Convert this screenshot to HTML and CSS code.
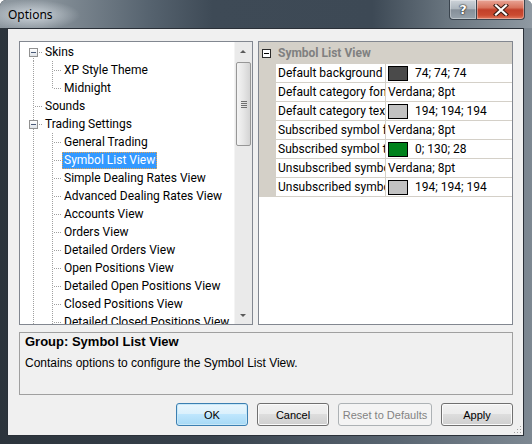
FILE: index.html
```html
<!DOCTYPE html>
<html lang="en">
<head>
  <meta charset="UTF-8">
  <title>Options</title>
  <link rel="stylesheet" href="styles.css">
</head>
<body>

  <div class="window">
    <div class="titlebar">
      <span class="title">Options</span>
      <div class="caption">
        <div class="cbtn help">?</div>
        <div class="cbtn close">
          <svg width="16" height="12" viewBox="0 0 16 12">
            <path d="M3 1.5 L13 10.5 M13 1.5 L3 10.5" stroke="#3b1c14" stroke-width="4.2" stroke-linecap="square" fill="none"/>
            <path d="M3 1.5 L13 10.5 M13 1.5 L3 10.5" stroke="#ffffff" stroke-width="2.2" stroke-linecap="square" fill="none"/>
          </svg>
        </div>
      </div>
    </div>

    <div class="client">
      <div class="panes">
        <div class="tree">
          <div class="tree-list">
            <div class="row"><span class="g g-exp g-first"><span class="box"></span></span><span class="label">Skins</span></div>
            <div class="row"><span class="g g-pipe"></span><span class="g g-tee"></span><span class="label">XP Style Theme</span></div>
            <div class="row"><span class="g g-pipe"></span><span class="g g-end"></span><span class="label">Midnight</span></div>
            <div class="row"><span class="g g-tee"></span><span class="label">Sounds</span></div>
            <div class="row"><span class="g g-exp"><span class="box"></span></span><span class="label">Trading Settings</span></div>
            <div class="row"><span class="g g-pipe"></span><span class="g g-tee"></span><span class="label">General Trading</span></div>
            <div class="row"><span class="g g-pipe"></span><span class="g g-tee"></span><span class="label selected">Symbol List View</span></div>
            <div class="row"><span class="g g-pipe"></span><span class="g g-tee"></span><span class="label">Simple Dealing Rates View</span></div>
            <div class="row"><span class="g g-pipe"></span><span class="g g-tee"></span><span class="label">Advanced Dealing Rates View</span></div>
            <div class="row"><span class="g g-pipe"></span><span class="g g-tee"></span><span class="label">Accounts View</span></div>
            <div class="row"><span class="g g-pipe"></span><span class="g g-tee"></span><span class="label">Orders View</span></div>
            <div class="row"><span class="g g-pipe"></span><span class="g g-tee"></span><span class="label">Detailed Orders View</span></div>
            <div class="row"><span class="g g-pipe"></span><span class="g g-tee"></span><span class="label">Open Positions View</span></div>
            <div class="row"><span class="g g-pipe"></span><span class="g g-tee"></span><span class="label">Detailed Open Positions View</span></div>
            <div class="row"><span class="g g-pipe"></span><span class="g g-tee"></span><span class="label">Closed Positions View</span></div>
            <div class="row"><span class="g g-pipe"></span><span class="g g-tee"></span><span class="label">Detailed Closed Positions View</span></div>
          </div>
          <div class="vscroll">
            <div class="arrow up"></div>
            <div class="thumb"><span></span><span></span><span></span><span></span></div>
            <div class="track"></div>
            <div class="arrow down"></div>
          </div>
        </div>

        <div class="grid">
          <div class="grid-head"><span class="gbox"></span>Symbol List View</div>
          <div class="prop"><span class="margin"></span><span class="name">Default background</span><span class="value"><i class="swatch dark"></i>74; 74; 74</span></div>
          <div class="prop"><span class="margin"></span><span class="name">Default category font</span><span class="value">Verdana; 8pt</span></div>
          <div class="prop"><span class="margin"></span><span class="name">Default category text color</span><span class="value"><i class="swatch silver"></i>194; 194; 194</span></div>
          <div class="prop"><span class="margin"></span><span class="name">Subscribed symbol font</span><span class="value">Verdana; 8pt</span></div>
          <div class="prop"><span class="margin"></span><span class="name">Subscribed symbol text color</span><span class="value"><i class="swatch green"></i>0; 130; 28</span></div>
          <div class="prop"><span class="margin"></span><span class="name">Unsubscribed symbol font</span><span class="value">Verdana; 8pt</span></div>
          <div class="prop"><span class="margin"></span><span class="name">Unsubscribed symbol text color</span><span class="value"><i class="swatch silver"></i>194; 194; 194</span></div>
        </div>
      </div>

      <div class="desc">
        <div class="desc-title">Group: Symbol List View</div>
        <div class="desc-text">Contains options to configure the Symbol List View.</div>
      </div>

      <div class="buttons">
        <button class="btn default">OK</button>
        <button class="btn">Cancel</button>
        <button class="btn" disabled>Reset to Defaults</button>
        <button class="btn">Apply</button>
      </div>

      <svg class="grip" width="9" height="9" viewBox="0 0 9 9">
        <rect x="7" y="1" width="1" height="1" fill="#a0a0a0"/>
        <rect x="4" y="4" width="1" height="1" fill="#a0a0a0"/>
        <rect x="7" y="4" width="1" height="1" fill="#a0a0a0"/>
        <rect x="1" y="7" width="1" height="1" fill="#a0a0a0"/>
        <rect x="4" y="7" width="1" height="1" fill="#a0a0a0"/>
        <rect x="7" y="7" width="1" height="1" fill="#a0a0a0"/>
      </svg>
    </div>
  </div>

</body>
</html>
```

FILE: styles.css
```css
body {
  margin: 0;
  background: #ffffff;
}

.window {
  width: 532px;
  height: 444px;
  display: flex;
  flex-direction: column;
  border-radius: 6px 6px 0 0;
  overflow: hidden;
  background: linear-gradient(90deg, #2c343c 0, #38424c 40%, #5a6672 75%, #7d8892 100%);
  font-family: "Liberation Sans", Arial, sans-serif;
}

/* title bar */
.titlebar {
  height: 28px;
  flex: none;
  display: flex;
  align-items: flex-start;
  background:
    radial-gradient(ellipse 48px 15px at 32px 15px, rgba(214, 221, 227, 0.9), rgba(214, 221, 227, 0)),
    linear-gradient(90deg, #8d979f 0, #8a949c 8%, #56636f 28%, #3e4a56 40%, #3d4955 70%, #69757f 84%, #8f99a2 100%);
}

.title {
  padding-left: 8px;
  line-height: 30px;
  font-family: "Noto Sans", sans-serif;
  font-size: 12px;
  color: #000;
}

.caption {
  margin-left: auto;
  margin-right: 7px;
  display: flex;
}

.cbtn {
  height: 19px;
  border: 1px solid #3a444e;
  border-top: none;
  box-shadow: inset 0 0 0 1px rgba(255, 255, 255, 0.35);
  display: flex;
  align-items: center;
  justify-content: center;
}

.help {
  width: 26px;
  border-radius: 0 0 0 4px;
  border-right: none;
  background: linear-gradient(#cdd3d9 0, #aeb7bf 45%, #858f99 52%, #97a2ab 100%);
  color: #fff;
  font-family: "DejaVu Sans", sans-serif;
  font-weight: bold;
  font-size: 13px;
  text-shadow: 0 0 1px #222, 0 0 1px #222, 0 0 2px #333;
}

.close {
  width: 47px;
  border-radius: 0 0 4px 0;
  background: linear-gradient(#e9a596 0, #d8735d 40%, #c2402a 52%, #cb4b31 80%, #e07a60 100%);
}

/* client area */
.client {
  flex: 1;
  margin: 0 8px 8px 7px;
  border: 1px solid #2a3038;
  background: #f0f0f0;
  padding: 12px 10px 9px 11px;
  display: flex;
  flex-direction: column;
  position: relative;
}

.panes {
  height: 284px;
  display: flex;
  gap: 5px;
}

/* tree */
.tree {
  width: 234px;
  box-sizing: border-box;
  border: 1px solid #828790;
  background: #fff;
  display: flex;
  overflow: hidden;
}

.tree-list {
  flex: 1;
  padding: 1px 0 0 4px;
  overflow: hidden;
  font-family: Roboto, sans-serif;
  font-size: 12px;
  color: #000;
}

.row {
  height: 18px;
  display: flex;
  align-items: center;
  white-space: nowrap;
}

.g {
  width: 19px;
  height: 18px;
  flex: none;
  position: relative;
}

.g::before,
.g::after {
  content: "";
  position: absolute;
}

.g-pipe::before,
.g-tee::before,
.g-end::before,
.g-exp::before {
  left: 9px;
  top: 0;
  bottom: 0;
  width: 1px;
  background-image: linear-gradient(#a0a0a0 50%, transparent 50%);
  background-size: 1px 2px;
}

.g-end::before {
  bottom: 9px;
}

.g-first::before {
  top: 9px;
}

.g-tee::after,
.g-end::after,
.g-exp::after {
  left: 11px;
  top: 9px;
  width: 8px;
  height: 1px;
  background-image: linear-gradient(90deg, #a0a0a0 50%, transparent 50%);
  background-size: 2px 1px;
}

.g-exp::after {
  left: 15px;
  width: 4px;
}

.box {
  position: absolute;
  left: 5px;
  top: 5px;
  width: 7px;
  height: 7px;
  border: 1px solid #919191;
  background: linear-gradient(#ffffff, #dfe3e8);
  z-index: 1;
}

.box::after {
  content: "";
  position: absolute;
  left: 1px;
  top: 3px;
  width: 5px;
  height: 1px;
  background: #4a5a78;
}

.label {
  height: 17px;
  line-height: 17px;
  padding: 0 2px;
  box-sizing: border-box;
}

.label.selected {
  background: #3399ff;
  color: #fff;
  border: 1px dotted #e8a24a;
  line-height: 15px;
  padding: 0 1px;
}

/* scrollbar */
.vscroll {
  width: 17px;
  flex: none;
  background: #eaeaea;
  border-left: 1px solid #f4f4f4;
  display: flex;
  flex-direction: column;
  align-items: center;
}

.arrow {
  height: 17px;
  width: 17px;
  position: relative;
  flex: none;
}

.arrow::after {
  content: "";
  position: absolute;
  left: 5px;
  border-left: 3px solid transparent;
  border-right: 3px solid transparent;
}

.arrow.up::after {
  top: 8px;
  border-bottom: 3px solid #5a5a5a;
}

.arrow.down::after {
  top: 7px;
  border-top: 3px solid #5a5a5a;
}

.thumb {
  width: 13px;
  height: 82px;
  margin-top: 3px;
  border: 1px solid #979797;
  border-radius: 2px;
  background: linear-gradient(90deg, #f4f4f4, #e6e6e6 50%, #d4d4d4);
  display: flex;
  flex-direction: column;
  align-items: center;
  justify-content: center;
  gap: 1px;
  flex: none;
}

.thumb span {
  width: 6px;
  height: 1px;
  background: #707070;
}

.track {
  flex: 1;
}

/* property grid */
.grid {
  flex: 1;
  border: 1px solid #828790;
  background: #fff;
  font-family: Roboto, sans-serif;
  font-size: 12px;
  color: #000;
  overflow: hidden;
}

.grid-head {
  height: 22px;
  background: #d4d0c8;
  display: flex;
  align-items: center;
  padding-left: 3px;
  font-weight: bold;
  color: #808080;
}

.gbox {
  width: 7px;
  height: 7px;
  border: 1px solid #2a2a2a;
  background: #fff;
  margin-right: 7px;
  position: relative;
}

.gbox::after {
  content: "";
  position: absolute;
  left: 1px;
  top: 3px;
  width: 5px;
  height: 1px;
  background: #000;
}

.prop {
  height: 18px;
  display: flex;
  border-bottom: 1px solid #d4d0c8;
  line-height: 18px;
  white-space: nowrap;
}

.margin {
  width: 17px;
  flex: none;
  background: #d4d0c8;
}

.name {
  width: 107px;
  flex: none;
  padding-left: 2px;
  overflow: hidden;
  border-right: 1px solid #d4d0c8;
}

.value {
  flex: 1;
  padding-left: 2px;
  display: flex;
  align-items: center;
  color: #000;
}

.swatch {
  width: 18px;
  height: 13px;
  border: 1px solid #000;
  margin-right: 7px;
}

.swatch.dark { background: #4a4a4a; }
.swatch.silver { background: #c2c2c2; }
.swatch.green { background: #00821c; }

/* description */
.desc {
  height: 63px;
  box-sizing: border-box;
  margin-top: 7px;
  border: 1px solid #a0a0a0;
  padding: 1px 5px;
}

.desc-title {
  font-weight: bold;
  font-size: 13px;
  line-height: 15px;
  color: #000;
}

.desc-text {
  margin-top: 7px;
  font-size: 12px;
  line-height: 14px;
  color: #000;
}

/* buttons */
.buttons {
  margin-top: 8px;
  display: flex;
  justify-content: flex-end;
  gap: 9px;
}

.btn {
  width: 72px;
  height: 23px;
  padding: 0;
  border: 1px solid #707070;
  border-radius: 3px;
  background: linear-gradient(#f2f2f2 0, #ebebeb 50%, #dddddd 50%, #cfcfcf 100%);
  box-shadow: inset 0 0 0 1px #fbfbfb;
  font-family: "Liberation Sans", Arial, sans-serif;
  font-size: 11px;
  color: #000;
}

.btn.default {
  border-color: #3c7fb1;
  background: linear-gradient(#eaf6fd 0, #d9f0fc 50%, #bee6fd 50%, #a7d9f5 100%);
  box-shadow: inset 0 0 0 1px #c8e8f8;
}

.btn:disabled {
  width: 94px;
  border-color: #adb2b5;
  background: #f4f4f4;
  box-shadow: none;
  color: #838383;
}

.grip {
  position: absolute;
  right: 1px;
  bottom: 1px;
}
```
